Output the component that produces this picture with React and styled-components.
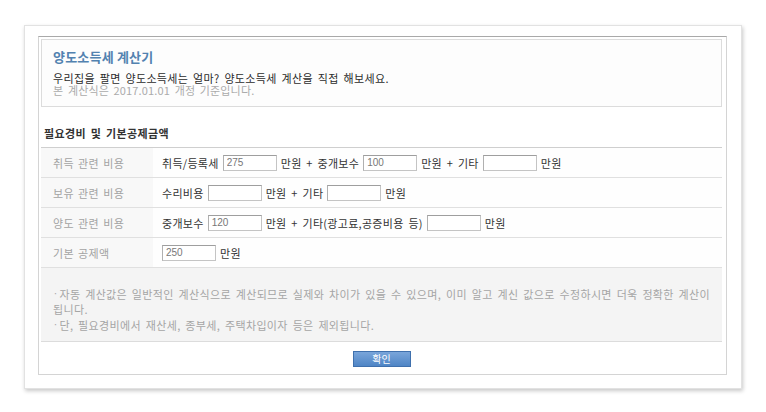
import React from "react";
import styled, { createGlobalStyle } from "styled-components";

const GlobalStyle = createGlobalStyle`
  html, body {
    margin: 0;
    padding: 0;
    background: #fff;
  }
  body {
    font-family: "Noto Sans CJK KR", "Noto Sans", sans-serif;
    color: #333;
  }
`;

const Page = styled.div`
  width: 766px;
  height: 412px;
  padding: 25px 0 0 24px;
  box-sizing: border-box;
`;

const Card = styled.div`
  width: 718px;
  height: 364px;
  box-sizing: border-box;
  background: #fff;
  border: 1px solid #e2e2e2;
  box-shadow: 1px 2px 4px rgba(0, 0, 0, 0.22);
  padding: 10px 14px 13px 13px;
`;

const Inner = styled.div`
  height: 100%;
  box-sizing: border-box;
  border: 1px solid #d4d4d4;
  border-top-color: #a9a9a9;
  padding: 2px 4px 0 2px;
  display: flex;
  flex-direction: column;
`;

const Header = styled.div`
  border: 1px solid #dcdcdc;
  background: #fdfdfd;
  padding: 9px 11px 8px;
  height: 68px;
  box-sizing: border-box;
`;

const Title = styled.h1`
  margin: 0 0 7px;
  font-size: 13px;
  line-height: 16px;
  font-weight: bold;
  color: #5282b0;
  letter-spacing: 0.2px;
`;

const Lead = styled.p`
  margin: 0;
  font-size: 11px;
  line-height: 12px;
  color: #2b2b2b;
  letter-spacing: 0.35px;
  word-spacing: 2px;
`;

const Muted = styled.p`
  margin: 0;
  font-size: 11px;
  line-height: 12px;
  color: #ababab;
  letter-spacing: 0.15px;
  word-spacing: 2px;
`;

const SectionTitle = styled.h2`
  margin: 0;
  padding: 19px 0 7px 3px;
  font-size: 11px;
  line-height: 14px;
  font-weight: bold;
  color: #333;
  letter-spacing: 0.35px;
  word-spacing: 2px;
`;

const Table = styled.div`
  border-top: 1px solid #cfcfcf;
`;

const Row = styled.div`
  display: grid;
  grid-template-columns: 112px 1fr;
  height: 30px;
  box-sizing: border-box;
  border-bottom: 1px solid #e0e0e0;
`;

const Label = styled.div`
  display: flex;
  align-items: center;
  padding-left: 12px;
  background: #f8f8f8;
  font-size: 11px;
  color: #a3a3a3;
  letter-spacing: 0.3px;
  word-spacing: 1.5px;
`;

const Cell = styled.div`
  display: flex;
  align-items: center;
  gap: 4px;
  padding-left: 9px;
  background: #fefefe;
  font-size: 11px;
  color: #333;
  white-space: nowrap;
  letter-spacing: 0.3px;
  word-spacing: 2px;
`;

const Field = styled.input`
  width: 54px;
  height: 16px;
  box-sizing: border-box;
  margin: 0;
  padding: 0 0 0 3px;
  border: 1px solid #c4c4c4;
  border-top-color: #9e9e9e;
  border-left-color: #b0b0b0;
  background: #fff;
  font-family: "Liberation Sans", Arial, sans-serif;
  font-size: 10px;
  letter-spacing: 0;
  color: #777;
  outline: none;
`;

const Notes = styled.div`
  background: #f4f4f4;
  padding: 18px 10px 10px 12px;
  height: 74px;
  box-sizing: border-box;
  border-bottom: 1px solid #dcdcdc;
`;

const Note = styled.p`
  margin: 0;
  font-size: 11px;
  line-height: 15px;
  color: #a5a5a5;
  white-space: nowrap;
  letter-spacing: 0.35px;
  word-spacing: 2px;

  &::before {
    content: "·";
    margin-right: 1px;
    font-size: 9px;
    vertical-align: 2px;
  }
`;

const Actions = styled.div`
  flex: 1;
  display: flex;
  justify-content: center;
  align-items: flex-start;
  padding-top: 9px;
  background: #fff;
`;

const Confirm = styled.button`
  width: 58px;
  height: 16px;
  padding: 0;
  border: 1px solid #3f70ad;
  background: linear-gradient(#79a5da, #4f85c5);
  color: #fff;
  font-family: "Noto Sans CJK KR", sans-serif;
  font-size: 10px;
  line-height: 14px;
  cursor: pointer;
`;

const rows = [
  {
    label: "취득 관련 비용",
    parts: ["취득/등록세", "275", "만원 + 중개보수", "100", "만원 + 기타", "", "만원"],
  },
  {
    label: "보유 관련 비용",
    parts: ["수리비용", "", "만원 + 기타", "", "만원"],
  },
  {
    label: "양도 관련 비용",
    parts: ["중개보수", "120", "만원 + 기타(광고료,공증비용 등)", "", "만원"],
  },
  {
    label: "기본 공제액",
    parts: [null, "250", "만원"],
  },
];

const App = () => {
  return (
    <>
      <GlobalStyle />
      <Page>
        <Card>
          <Inner>
            <Header>
              <Title>양도소득세 계산기</Title>
              <Lead>우리집을 팔면 양도소득세는 얼마? 양도소득세 계산을 직접 해보세요.</Lead>
              <Muted>본 계산식은 2017.01.01 개정 기준입니다.</Muted>
            </Header>

            <SectionTitle>필요경비 및 기본공제금액</SectionTitle>
            <Table>
              {rows.map((row) => (
                <Row key={row.label}>
                  <Label>{row.label}</Label>
                  <Cell>
                    {row.parts.map((p, i) =>
                      p === null ? null : i % 2 === 1 ? (
                        <Field key={i} defaultValue={p} />
                      ) : (
                        <span key={i}>{p}</span>
                      )
                    )}
                  </Cell>
                </Row>
              ))}
            </Table>

            <Notes>
              <Note>
                자동 계산값은 일반적인 계산식으로 계산되므로 실제와 차이가 있을 수 있으며, 이미 알고 계신 값으로 수정하시면 더욱 정확한 계산이
                <br />
                됩니다.
              </Note>
              <Note>단, 필요경비에서 재산세, 종부세, 주택차입이자 등은 제외됩니다.</Note>
            </Notes>

            <Actions>
              <Confirm type="button">확인</Confirm>
            </Actions>
          </Inner>
        </Card>
      </Page>
    </>
  );
};

export default App;
